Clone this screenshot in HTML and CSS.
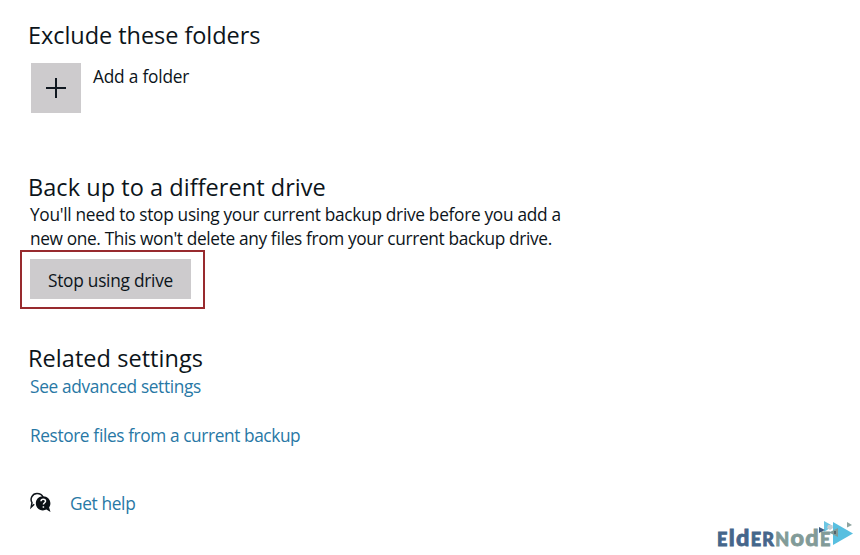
FILE: index.html
```html
<!DOCTYPE html>
<html lang="en">
<head>
<meta charset="utf-8">
<title>Backup options</title>
<link rel="stylesheet" href="styles.css">
</head>
<body>
<main class="page">
  <section class="exclude">
    <h2 class="tight">Exclude these folders</h2>
    <div class="add-row">
      <button class="add" aria-label="Add a folder"><svg width="20" height="20" viewBox="0 0 20 20"><path d="M10 0v20M0 10h20" stroke="#101820" stroke-width="2"/></svg></button>
      <span class="add-label">Add a folder</span>
    </div>
  </section>
  <section class="different">
    <h2>Back up to a different drive</h2>
    <p>You'll need to stop using your current backup drive before you add a<br><span class="second">new one. This won't delete any files from your current backup drive.</span></p>
    <div class="highlight"><button class="stop">Stop using drive</button></div>
  </section>
  <section class="related">
    <h2>Related settings</h2>
    <a>See advanced settings</a>
    <a class="restore">Restore files from a current backup</a>
  </section>
  <div class="help">
    <svg width="22" height="22" viewBox="0 0 22 22"><path d="M4.200 12.300 1.200 15.200 2 10.600C-.4 6.500 2.400 1.500 7 1.500c3 0 5 1.200 6 3.500" fill="none" stroke="#10161b" stroke-width="1.500"/><path d="M13 4.200c-4.300 0-7.200 3.200-7.200 7.100s2.900 7.100 7.200 7.100c1.300 0 2.400-.3 3.400-.8l4.100 2.300-1.400-4.400c.8-1 1.300-2.500 1.300-4.200 0-3.900-3.100-7.100-7.400-7.100z" fill="#0b1015"/><path d="M11 9.300c0-1.300 1-2 2.300-2s2.200.7 2.200 1.900c0 1.600-2.100 1.600-2.100 3.400M13.400 14.200v1.600" fill="none" stroke="#fff" stroke-width="1.500"/></svg>
    <a>Get help</a>
  </div>
</main>
<div class="logo">
  <span class="name"><span class="blue"><small>E</small>ld<small>ER</small></span><span class="grey"><small>N</small>od<small>E</small></span></span>
  <svg class="mark" width="36" height="25" viewBox="0 0 36 25"><path d="M14 1 34 12.500 14 24z" fill="#58bfe0"/><path d="M5 0 14 5 5 11z" fill="#6cc6e3"/><path d="M0 6 6 9 0 12z" fill="#3f5c80"/><path d="M9 4h4l1 3-3 2-3-2z" fill="#c7cdd1"/><path d="M19 7v9l-9-4.500z" fill="#819b98"/><path d="M15 10h2v3h-2z" fill="#53636c"/><path d="M28 1 33 4 28 6.500z" fill="#8da39f"/></svg>
</div>
</body>
</html>
```

FILE: styles.css
```css
* { box-sizing: border-box; }
body { margin: 0; width: 860px; height: 555px; overflow: hidden; position: relative; background: #fff; color: #0c141a; font: 17.3px/24px "Open Sans", "Noto Sans", sans-serif; letter-spacing: -0.3px; font-feature-settings: "liga" 1; }
.page { padding: 19px 0 0 30px; }
h2 { margin: 0 0 0 -2px; font-size: 23.5px; line-height: 32px; font-weight: 400; letter-spacing: 0.05px; white-space: nowrap; }
.tight { letter-spacing: -0.05px; }
.second { letter-spacing: -0.36px; }
button { display: flex; align-items: center; justify-content: center; border: 0; padding: 0; background: #cdcbcd; color: inherit; font: inherit; letter-spacing: -0.25px; }
.exclude { height: 152px; }
.add-row { display: flex; gap: 12px; margin: 12px 0 0 1px; }
.add { width: 50px; height: 50px; }
.add-label { margin-top: 2px; letter-spacing: -0.2px; }
.different { height: 171px; }
p { margin: 0; white-space: nowrap; }
.highlight { width: 185px; height: 59px; margin: -1px 0 0 -10px; padding: 7px 8px; border: 2px solid #982a2e; }
.stop { width: 161px; height: 40px; padding-top: 4px; }
.related h2 { margin-bottom: 1px; }
a { display: block; color: #2878a5; white-space: nowrap; letter-spacing: -0.35px; }
.restore { margin-top: 25px; letter-spacing: -0.4px; }
.help { display: flex; gap: 18px; margin-top: 44px; }
.logo { position: absolute; left: 717px; top: 521px; display: flex; }
.name { font: 900 23.5px/32px Lato, sans-serif; letter-spacing: 1.3px; -webkit-text-stroke: 0.8px; }
.name small { font-size: 18px; }
.blue { color: #45668b; }
.grey { color: #829b98; }
.mark { margin-left: -13px; margin-top: 0; }
```
